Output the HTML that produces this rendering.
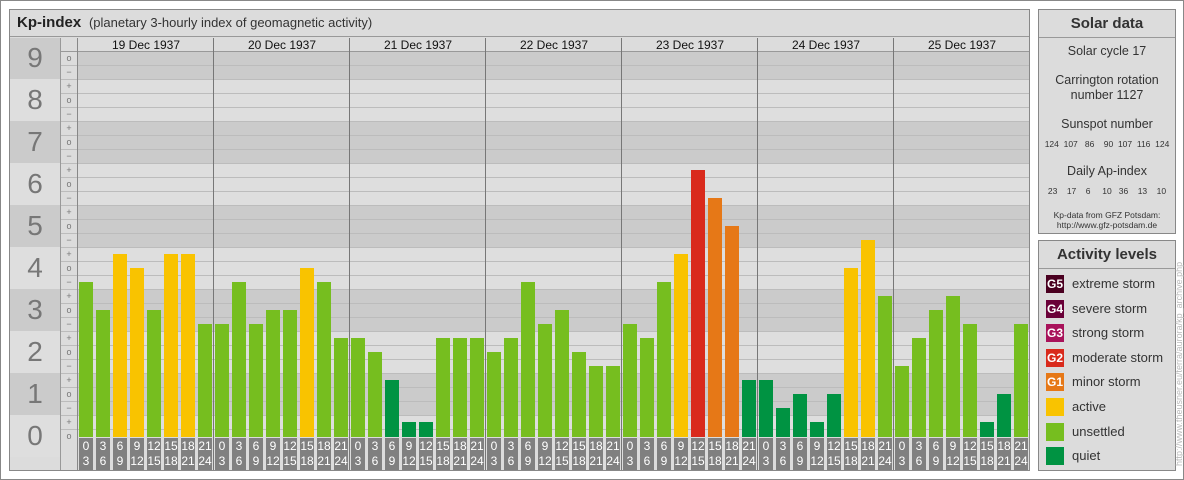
<!DOCTYPE html>
<html><head><meta charset="utf-8"><style>
*{margin:0;padding:0;box-sizing:border-box}
body{width:1184px;height:480px;background:#fff;position:relative;overflow:hidden;font-family:"Liberation Sans",sans-serif;}
.a{position:absolute}
#outer{left:0;top:0;width:1184px;height:480px;border:1px solid #888;}
#main{left:9px;top:9px;width:1021px;height:462px;border:1px solid #888;background:#dcdcdc;}
.pn{border:1px solid #888;background:#dcdcdc;}
.ph{border-bottom:1px solid #999;font-weight:bold;font-size:15px;color:#333;text-align:center;}
.tl{background:#808080;color:#fff;font-size:12px;line-height:15px;text-align:center;width:14px;height:32px;padding-top:1px}
.sw{width:18px;height:18px;color:#fff;font-size:12px;font-weight:bold;line-height:18px;text-align:center;}
.lg{font-size:13px;color:#333}
</style></head><body>
<div class="a" id="outer"></div>
<div class="a" id="main"></div>
<div class="a" style="left:10px;top:10px;width:1019px;height:27px;border-bottom:1px solid #999;"></div>
<div class="a" style="left:17px;top:14px;font-size:15px;color:#222;"><b>Kp-index</b> <span style="font-size:13px;color:#333">&nbsp;(planetary 3-hourly index of geomagnetic activity)</span></div>
<div id="chart"></div>
<div class="a pn" style="left:1038px;top:9px;width:138px;height:225px;"></div>
<div class="a ph" style="left:1039px;top:10px;width:136px;height:28px;line-height:28px;">Solar data</div>
<div class="a" style="left:1039px;top:44px;width:136px;text-align:center;color:#333;font-size:12.5px;line-height:15px;">
<div>Solar cycle 17</div>
<div style="margin-top:14px">Carrington rotation<br>number 1127</div>
<div style="margin-top:14px">Sunspot number</div>
<div style="font-size:8.5px;margin-top:5px;">124&nbsp; 107&nbsp;&nbsp; 86&nbsp;&nbsp;&nbsp; 90&nbsp; 107&nbsp; 116&nbsp; 124</div>
<div style="margin-top:12px">Daily Ap-index</div>
<div style="font-size:8.5px;margin-top:5px;">23&nbsp;&nbsp;&nbsp; 17&nbsp;&nbsp;&nbsp; 6&nbsp;&nbsp;&nbsp;&nbsp; 10&nbsp;&nbsp; 36&nbsp;&nbsp;&nbsp; 13&nbsp;&nbsp;&nbsp; 10</div>
<div style="font-size:8.5px;line-height:10px;margin-top:11px;">Kp-data from GFZ Potsdam:<br>http://www.gfz-potsdam.de</div>
</div>
<div class="a pn" style="left:1038px;top:240px;width:138px;height:231px;"></div>
<div class="a ph" style="left:1039px;top:241px;width:136px;height:28px;line-height:28px;">Activity levels</div>
<div id="leg"></div>
<div class="a" style="left:1174px;top:466px;transform-origin:0 0;transform:rotate(-90deg);font-size:9px;color:#bbb;white-space:nowrap;">http://www.theusner.eu/terra/aurora/kp_archive.php</div>
<script>
var h='';
function Y(t){return 436-14*t;}
for(var n=9;n>=0;n--){
 var tp=Y(3*n)-21,bt=Y(3*n)+21; if(tp<38)tp=38; if(bt>470)bt=470;
 var dark=(n%2==1);
 h+='<div class="a" style="left:10px;top:'+tp+'px;width:50px;height:'+(bt-tp)+'px;background:'+(dark?'#cbcbcb':'#dedede')+';"></div>';
 h+='<div class="a" style="left:10px;top:'+(Y(3*n)-18)+'px;width:50px;text-align:center;font-size:28px;color:#777;line-height:36px;">'+n+'</div>';
 var ct=Math.max(tp,52),cb=Math.min(bt,437);
 if(cb>ct)h+='<div class="a" style="left:78px;top:'+ct+'px;width:951px;height:'+(cb-ct)+'px;background:'+(dark?'#cbcbcb':'#dedede')+';"></div>';
}
h+='<div class="a" style="left:60px;top:38px;width:18px;height:432px;background:#dcdcdc;border-left:1px solid #999;border-right:1px solid #999"></div>';
for(var t=27;t>=0;t--){
 var y=Y(t);
 var s=['o','+','−'][t%3];
 h+='<div class="a" style="left:61px;top:'+(y-6)+'px;width:16px;text-align:center;font-size:9px;color:#777;line-height:12px;">'+s+'</div>';
 if(t>0){h+='<div class="a" style="left:61px;top:'+(y+7)+'px;width:968px;height:1px;background:#bcbcbc;"></div>';}
}
h+='<div class="a" style="left:61px;top:'+(Y(27)-7)+'px;width:16px;height:1px;background:#bcbcbc;"></div>';
h+='<div class="a" style="left:61px;top:37px;width:968px;height:15px;background:#dcdcdc;border-bottom:1px solid #999"></div>';
var d=[[11,9,13,12,9,13,13,8],[8,11,8,9,9,12,11,7],[7,6,4,1,1,7,7,7],[6,7,11,8,9,6,5,5],[8,7,11,13,19,17,15,4],[4,2,3,1,3,12,14,10],[5,7,9,10,8,1,3,8]];
function col(t){if(t>=18)return '#d92a1c';if(t>=15)return '#e67817';if(t>=12)return '#f9c300';if(t>=5)return '#76be1f';return '#009342';}
var hr=['0','3','6','9','12','15','18','21','24'];
for(var i=0;i<7;i++){
 var x0=78+136*i;
 h+='<div class="a" style="left:'+x0+'px;top:38px;width:136px;text-align:center;font-size:12px;color:#111;line-height:14px;">'+(19+i)+' Dec 1937</div>';
 for(var j=0;j<8;j++){
  var x=x0+17*j+1,v=d[i][j];
  h+='<div class="a" style="left:'+x+'px;top:'+Y(v)+'px;width:14px;height:'+(436-Y(v)+1)+'px;background:'+col(v)+'"></div>';
  h+='<div class="a tl" style="left:'+x+'px;top:438px;">'+hr[j]+'<br>'+hr[j+1]+'</div>';
 }
 if(i>0)h+='<div class="a" style="left:'+(x0-1)+'px;top:38px;width:1px;height:432px;background:#777"></div>';
}
h+='<div class="a" style="left:77px;top:38px;width:1px;height:432px;background:#888"></div>';
document.getElementById('chart').innerHTML=h;
var L=[['#4a0020','G5','extreme storm'],['#6a0038','G4','severe storm'],['#a8125a','G3','strong storm'],['#d92a1c','G2','moderate storm'],['#e67817','G1','minor storm'],['#f9c300','','active'],['#76be1f','','unsettled'],['#009342','','quiet']];
var g='';
for(var k=0;k<8;k++){var yy=275+24.6*k;
 g+='<div class="a sw" style="left:1046px;top:'+yy+'px;background:'+L[k][0]+'">'+L[k][1]+'</div>';
 g+='<div class="a lg" style="left:1072px;top:'+(yy+1)+'px;">'+L[k][2]+'</div>';}
document.getElementById('leg').innerHTML=g;
</script>
</body></html>
